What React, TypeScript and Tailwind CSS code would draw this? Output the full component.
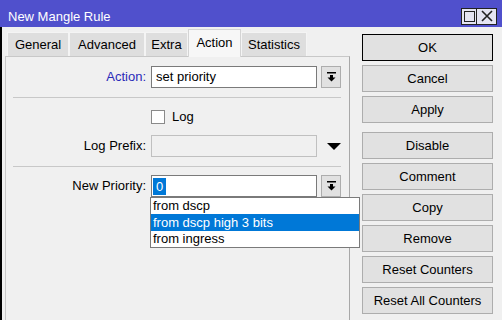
import React from 'react';

const ArrowDownBar = () => (
  <svg width="9" height="10" viewBox="0 0 9 10">
    <rect x="0" y="0" width="9" height="1.5" fill="#000" />
    <path d="M3 3 H6 V5.5 H8.5 L4.5 9.5 L0.5 5.5 H3 Z" fill="#000" />
  </svg>
);

const ComboButton = () => (
  <div className="w-[20px] h-[22px] ml-[4px] bg-[#e1e1e1] border border-[#adadad] flex items-center justify-center">
    <ArrowDownBar />
  </div>
);

const tabs = [
  { name: 'General', w: 'w-[62px]' },
  { name: 'Advanced', w: 'w-[76px]' },
  { name: 'Extra', w: 'w-[43px]' },
  { name: 'Action', w: 'w-[53px]', active: true },
  { name: 'Statistics', w: 'w-[66px]' },
];

const buttons = ['OK', 'Cancel', 'Apply', 'Disable', 'Comment', 'Copy', 'Remove', 'Reset Counters', 'Reset All Counters'];

const App: React.FC = () => {
  return (
    <div
      className="w-[502px] h-[320px] overflow-hidden bg-[#f0f0f0] text-[13px] text-black"
      style={{ fontFamily: '"Liberation Sans", Arial, sans-serif' }}
    >
      {/* title bar */}
      <div className="h-[27px] bg-[#5050cc] flex items-center pl-[8px] pr-[5px] pt-[5px]">
        <span className="text-white leading-[15px]">New Mangle Rule</span>
        <div className="ml-auto flex">
          <div className="w-[16px] h-[17px] border border-[#222] bg-[#e4e4f2] flex items-center justify-center">
            <div className="w-[11px] h-[11px] border border-[#222]" />
          </div>
          <div className="w-[20px] h-[17px] border border-l-0 border-[#222] bg-[#e4e4f2] flex items-center justify-center">
            <svg width="12" height="12" viewBox="0 0 12 12">
              <path d="M1 1 L11 11 M11 1 L1 11" stroke="#222" strokeWidth="1.6" />
            </svg>
          </div>
        </div>
      </div>

      <div className="flex h-[293px] border-l-2 border-black">
        {/* left side: tabs + panel */}
        <div className="w-[348px] pt-[2px]">
          <div className="flex items-end h-[27px] pl-[5px]">
            {tabs.map(t => (
              <div
                key={t.name}
                className={`${t.w} flex items-center justify-center border border-b-0 ${
                  t.active
                    ? 'h-[28px] bg-[#f7f7f7] border-[#d4d4d4] -mb-[1px] relative z-10 pb-[2px]'
                    : 'h-[24px] bg-[#dedede] border-[#f4f4f4]'
                }`}
              >
                {t.name}
              </div>
            ))}
          </div>

          <div className="ml-[3px] w-[345px] h-[300px] border border-[#c8c8c8] border-r-[#a8a8a8] pt-[9px]">
            {/* Action */}
            <div className="flex items-center h-[22px]">
              <div className="w-[140px] text-right text-[#2a2ab8]">Action:</div>
              <div className="ml-[5px] w-[166px] h-[22px] bg-white border border-[#7a7a7a] flex items-center pl-[4px]">
                set priority
              </div>
              <ComboButton />
            </div>

            <div className="ml-[7px] mt-[9px] w-[328px] h-[1px] bg-[#c8c8c8]" />

            {/* Log */}
            <div className="flex items-center h-[14px] mt-[12px] pl-[145px]">
              <div className="w-[14px] h-[14px] bg-white border border-[#8a8a8a]" />
              <span className="ml-[7px]">Log</span>
            </div>

            {/* Log Prefix */}
            <div className="flex items-center h-[22px] mt-[11px]">
              <div className="w-[140px] text-right">Log Prefix:</div>
              <div className="ml-[5px] w-[166px] h-[22px] bg-[#f0f0f0] border border-[#c0c0c0]" />
              <div className="w-[20px] ml-[4px] flex items-center justify-center pl-[6px]">
                <svg width="14" height="7" viewBox="0 0 14 7">
                  <path d="M0 0 H14 L7 7 Z" fill="#000" />
                </svg>
              </div>
            </div>

            <div className="ml-[7px] mt-[9px] w-[328px] h-[1px] bg-[#c8c8c8]" />

            {/* New Priority */}
            <div className="flex items-center h-[22px] mt-[8px] relative">
              <div className="w-[140px] text-right">New Priority:</div>
              <div className="ml-[5px] w-[166px] h-[22px] bg-white border border-[#7a7a7a] flex items-center pl-[1px]">
                <span className="bg-[#0078d7] text-white px-[3px] leading-[17px]">0</span>
              </div>
              <ComboButton />

              <div className="absolute left-[144px] top-[22px] w-[210px] bg-white border border-[#7a7a7a] z-20">
                <div className="h-[16px] flex items-center pl-[2px]">from dscp</div>
                <div className="h-[17px] flex items-center pl-[2px] bg-[#0078d7] text-white">from dscp high 3 bits</div>
                <div className="h-[16px] flex items-center pl-[2px]">from ingress</div>
              </div>
            </div>
          </div>
        </div>

        {/* right side: buttons */}
        <div className="pl-[12px] pt-[7px] flex flex-col">
          {buttons.map((b, i) => (
            <div
              key={b}
              className={`w-[131px] h-[27px] flex items-center justify-center bg-[#e1e1e1] border ${
                i === 0 ? 'border-black' : 'border-[#adadad]'
              } ${i === 0 ? '' : i === 3 ? 'mt-[9px]' : 'mt-[4px]'}`}
            >
              {b}
            </div>
          ))}
        </div>
      </div>
    </div>
  );
};

export default App;
